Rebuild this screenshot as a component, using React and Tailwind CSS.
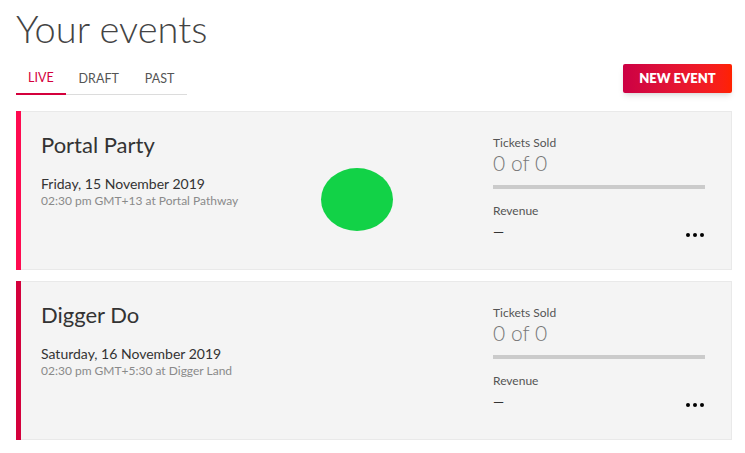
const events = [
  {
    name: 'Portal Party',
    date: 'Friday, 15 November 2019',
    detail: '02:30 pm GMT+13 at Portal Pathway',
    accent: 'bg-[#ff0a50]',
    blob: true,
  },
  {
    name: 'Digger Do',
    date: 'Saturday, 16 November 2019',
    detail: '02:30 pm GMT+5:30 at Digger Land',
    accent: 'bg-[#d4003c]',
    blob: false,
  },
];

function EventCard({ event }) {
  return (
    <div className="flex h-[159px] bg-[#f4f4f4] border border-[#e9e9e9]">
      <div className={`w-[5px] -my-px -ml-px shrink-0 ${event.accent}`} />
      <div className="flex-1 flex pl-5 pt-[17px]">
        <div className="w-[280px]">
          <h2 className="text-[22px] leading-[32px] text-[#333]">{event.name}</h2>
          <p className="mt-[14px] text-[14px] leading-[18px] text-[#333]">{event.date}</p>
          <p className="text-[12px] leading-[16px] text-[#8a8a8a]">{event.detail}</p>
        </div>
        <div className="w-[172px]">
          {event.blob && <div className="mt-[39px] w-[72px] h-[63px] rounded-[50%] bg-[#12d247]" />}
        </div>
        <div className="w-[212px] pt-[6px]">
          <p className="text-[12px] leading-[16px] text-[#555]">Tickets Sold</p>
          <p className="text-[21px] leading-[24px] font-light text-[#777]">0 of 0</p>
          <div className="mt-[10px] h-[4px] bg-[#cbcbcb]" />
          <p className="mt-[14px] text-[12px] leading-[16px] text-[#555]">Revenue</p>
          <div className="flex items-center justify-between">
            <span className="text-[14px] leading-[26px] text-[#333]">—</span>
            <div className="flex gap-[3px] mt-[5px] mr-[1px]">
              <span className="w-[4px] h-[4px] rounded-full bg-black" />
              <span className="w-[4px] h-[4px] rounded-full bg-black" />
              <span className="w-[4px] h-[4px] rounded-full bg-black" />
            </div>
          </div>
        </div>
      </div>
    </div>
  );
}

export default function App() {
  return (
    <div className="w-[745px] h-[453px] bg-white pl-4 pr-[13px] font-['Lato','Open_Sans',sans-serif] overflow-hidden">
      <h1 className="pt-[5px] text-[38px] leading-[46px] font-light text-[#444]">Your events</h1>
      <div className="mt-[13px] flex items-end justify-between">
        <div className="flex border-b border-[#dcdcdc]">
          <button className="px-[12px] pb-[5px] -mb-px border-b-2 border-[#d4003c] text-[12.5px] text-[#d4003c]">LIVE</button>
          <button className="px-[13px] pb-[5px] text-[12.5px] text-[#555]">DRAFT</button>
          <button className="px-[13px] pb-[5px] text-[12.5px] text-[#555]">PAST</button>
        </div>
        <button className="mb-[2px] w-[109px] h-[29px] rounded-[2px] bg-gradient-to-r from-[#cc0044] to-[#ff2200] text-white text-[13px] font-extrabold shadow-md">
          NEW EVENT
        </button>
      </div>
      <div className="mt-[16px] flex flex-col gap-[11px]">
        {events.map((e) => (
          <EventCard key={e.name} event={e} />
        ))}
      </div>
    </div>
  );
}
